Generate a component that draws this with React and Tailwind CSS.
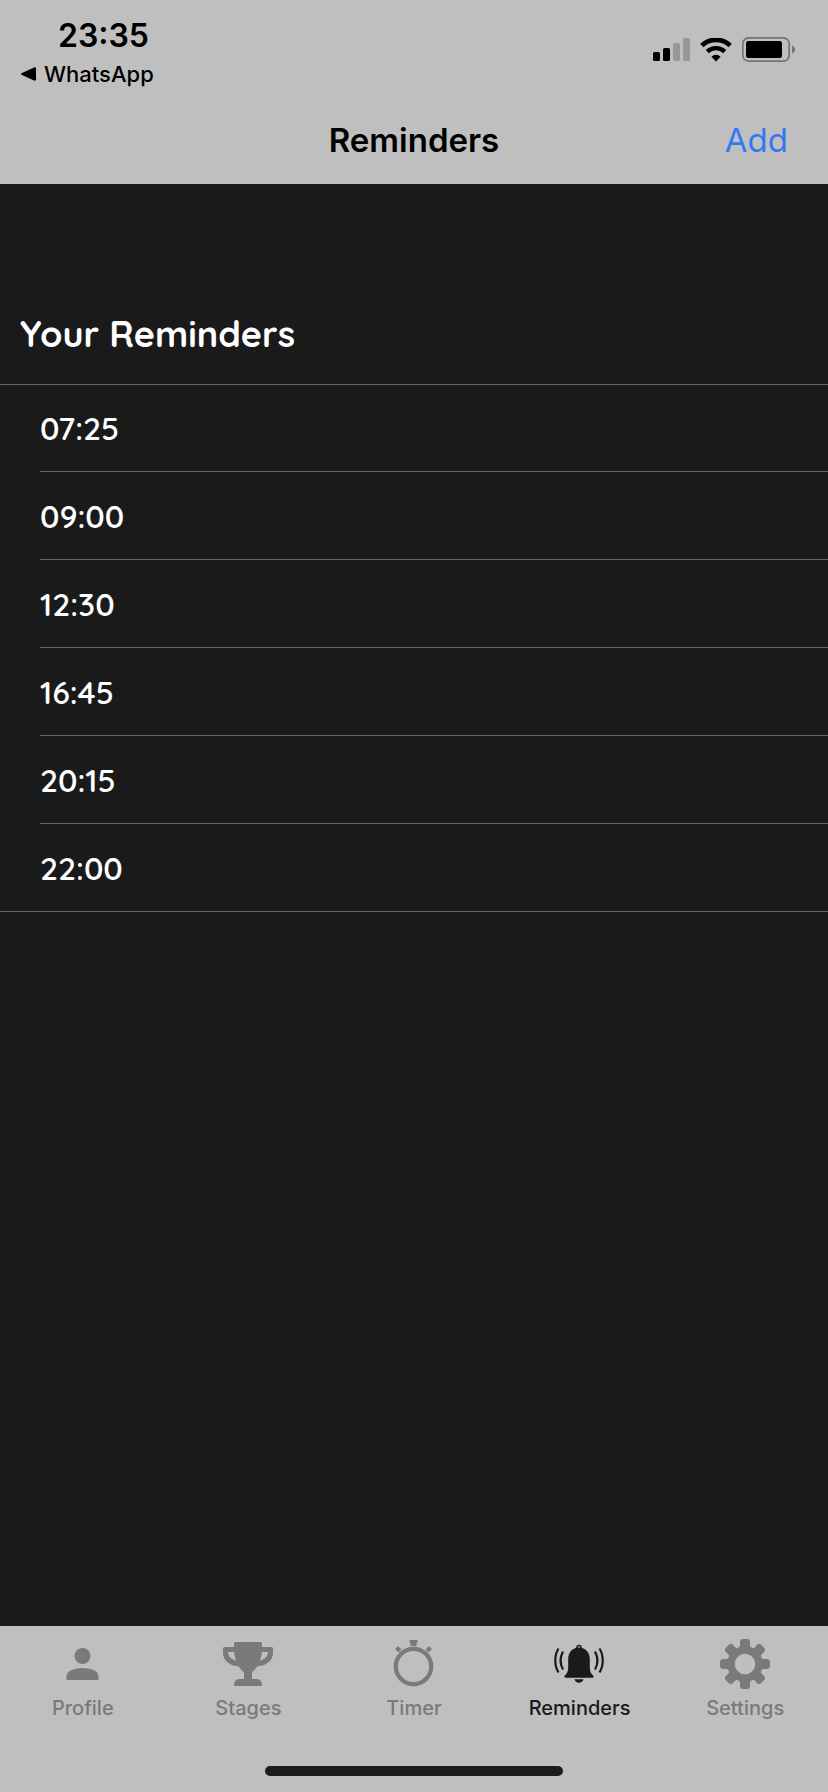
import React from "react";

const reminders = ["07:25", "09:00", "12:30", "16:45", "20:15", "22:00"];

function SignalIcon() {
  return (
    <svg width="37" height="24" viewBox="0 0 37 24" aria-hidden="true">
      <rect x="0" y="14" width="7" height="9" rx="1.5" />
      <rect x="10" y="10" width="7" height="13" rx="1.5" />
      <rect x="20" y="5" width="7" height="18" rx="1.5" fill="#989898" />
      <rect x="30" y="0" width="7" height="23" rx="1.5" fill="#989898" />
    </svg>
  );
}

function WifiIcon() {
  return (
    <svg width="32" height="24" viewBox="0 0 32 24" fill="none" stroke="#000" aria-hidden="true">
      <path d="M1.800 7.600a20.400 20.400 0 0 1 28.400 0" strokeWidth="4.600" />
      <path d="M7.300 13.600a12.600 12.600 0 0 1 17.400 0" strokeWidth="4.400" />
      <path d="M16 23.500l-4.600-4.800a6.700 6.700 0 0 1 9.200 0z" fill="#000" stroke="none" />
    </svg>
  );
}

function BatteryIcon() {
  return (
    <svg width="53" height="25" viewBox="0 0 53 25" aria-hidden="true">
      <rect x="0.8" y="0.8" width="46.4" height="23.4" rx="6" fill="none" stroke="#757575" strokeWidth="1.7" />
      <rect x="4" y="4" width="36" height="17" rx="2.5" />
      <path d="M50 8.500c2 .8 3 2.300 3 4s-1 3.200-3 4z" fill="#757575" />
    </svg>
  );
}

function ProfileIcon() {
  return (
    <svg width="52" height="52" viewBox="0 0 52 52" fill="currentColor" aria-hidden="true">
      <circle cx="25.5" cy="18" r="8" />
      <path d="M9.500 42v-4c0-5.300 8-8 16-8s16 2.700 16 8v4z" />
    </svg>
  );
}

function TrophyIcon() {
  return (
    <svg width="52" height="52" viewBox="0 0 52 52" fill="currentColor" aria-hidden="true">
      <path
        fillRule="evenodd"
        d="M13.500 4h25q1.500 0 1.500 1.500V9h9.500q1.500 0 1.500 1.500V15c0 8-7.500 13-15.500 13.200-1.500 2-3.500 4.300-5.500 6.300V41h4q6 0 6 5.500 0 1.500-1.500 1.500h-25Q12 48 12 46.500 12 41 18 41h4v-6.500c-2-2-4-4.300-5.500-6.300C8.500 28 1 23 1 15v-4.500Q1 9 2.500 9H12V5.500Q12 4 13.500 4zM6 14c0 4.500 4 7.700 8.200 8.800C13 20 12.300 17 12.200 14zM46 14h-6.200c-.1 3-.8 6-2 8.800C42 21.700 46 18.500 46 14z"
      />
    </svg>
  );
}

function TimerIcon() {
  return (
    <svg width="52" height="52" viewBox="0 0 52 52" fill="currentColor" aria-hidden="true">
      <circle cx="25.500" cy="28.500" r="17.700" fill="none" stroke="currentColor" strokeWidth="4.300" />
      <path d="M21.500 2h8v2.500l-1 1V8h-6V5.500l-1-1z" />
      <path d="M10 8l3.500 3.500-3 3L7 11zM41 8l3 3-3.500 3.500-3-3z" />
    </svg>
  );
}

function BellIcon() {
  return (
    <svg width="52" height="52" viewBox="0 0 52 52" fill="currentColor" aria-hidden="true">
      <circle cx="25" cy="9.500" r="2" fill="none" stroke="currentColor" strokeWidth="1.500" />
      <path d="M25 9.500C18.500 9.500 14.200 14.500 14.200 21v7c0 5-.8 7.300-3.200 9.300-1 .8-.8 2.400.6 2.400h26.800c1.400 0 1.600-1.600.6-2.400-2.400-2-3.200-4.300-3.200-9.300v-7c0-6.500-4.300-11.500-10.800-11.500z" />
      <path d="M20.500 41.300h9c-.6 2.200-2.300 3.500-4.500 3.500s-3.900-1.300-4.500-3.500z" />
      <g fill="none" stroke="currentColor" strokeWidth="2.200">
        <path d="M4.500 10.500c-4.300 7-4.300 17 0 24M9 13.500c-3 5.500-3 12.500 0 18M45.500 10.500c4.300 7 4.300 17 0 24M41 13.500c3 5.500 3 12.500 0 18" />
      </g>
    </svg>
  );
}

const toothAngles = [0, 45, 90, 135, 180, 225, 270, 315];

function GearIcon() {
  return (
    <svg width="52" height="52" viewBox="0 0 52 52" fill="currentColor" aria-hidden="true">
      <circle cx="26" cy="26" r="14" fill="none" stroke="currentColor" strokeWidth="7.400" />
      {toothAngles.map((angle) => (
        <path
          key={angle}
          transform={`rotate(${angle} 26 26)`}
          d="M18.500 10.500c1.800-.6 2.500-1.500 2.500-3V4q0-3 3-3h4q3 0 3 3v3.500c0 1.500.7 2.400 2.500 3l-3 4h-9z"
        />
      ))}
    </svg>
  );
}

const tabs = [
  { label: "Profile", Icon: ProfileIcon },
  { label: "Stages", Icon: TrophyIcon },
  { label: "Timer", Icon: TimerIcon },
  { label: "Reminders", Icon: BellIcon, active: true },
  { label: "Settings", Icon: GearIcon },
];

export default function App() {
  return (
    <div className="flex min-h-screen flex-col bg-[#1a1a1a] font-['Inter',sans-serif] text-black">
      <header className="bg-[#bfbfbf]">
        <div className="flex items-start justify-between pl-5 pr-[33px] pt-4">
          <div>
            <div className="pl-[38px] text-[32px] font-semibold leading-10">23:35</div>
            <button type="button" className="flex items-center gap-2 text-[22px] font-medium leading-9">
              <svg width="16" height="14" viewBox="0 0 16 14" aria-hidden="true">
                <path d="M14 .5q2-.8 2 1.200v10.600q0 2-2 1.200L2 8Q0 7 2 6z" />
              </svg>
              WhatsApp
            </button>
          </div>
          <div className="flex items-center gap-2.5 pt-[21px]">
            <SignalIcon />
            <WifiIcon />
            <BatteryIcon />
          </div>
        </div>
        <div className="grid h-[92px] grid-cols-[1fr_auto_1fr] items-center px-10 pt-1">
          <h1 className="col-start-2 text-[33px] font-semibold leading-10">Reminders</h1>
          <button type="button" className="justify-self-end text-[33px] leading-10 text-[#3478f6]">
            Add
          </button>
        </div>
      </header>

      <main className="flex-1 pt-[120px] font-['Quicksand','Lato',sans-serif] text-white">
        <h2 className="px-5 pb-[26px] pt-1.5 text-4xl font-bold leading-12">Your Reminders</h2>
        <ul className="border-y border-[#666666] pl-10">
          {reminders.map((time) => (
            <li
              key={time}
              className="flex h-22 items-center border-b border-[#666666] text-[32px] font-semibold leading-10 first:h-[87px] last:h-[87px] last:border-b-0"
            >
              {time}
            </li>
          ))}
        </ul>
      </main>

      <footer className="bg-[#bfbfbf]">
        <nav className="grid grid-cols-5 pt-3">
          {tabs.map(({ label, Icon, active }) => (
            <button
              key={label}
              type="button"
              aria-current={active ? "page" : undefined}
              className={
                active
                  ? "flex flex-col items-center gap-1 text-xl font-medium text-[#1a1a1a]"
                  : "flex flex-col items-center gap-1 text-xl font-medium text-[#7a7a7a]"
              }
            >
              <Icon />
              {label}
            </button>
          ))}
        </nav>
        <div className="flex justify-center pb-4 pt-11">
          <div className="h-2.5 w-[36%] rounded-full bg-[#1c1c1c]" />
        </div>
      </footer>
    </div>
  );
}
